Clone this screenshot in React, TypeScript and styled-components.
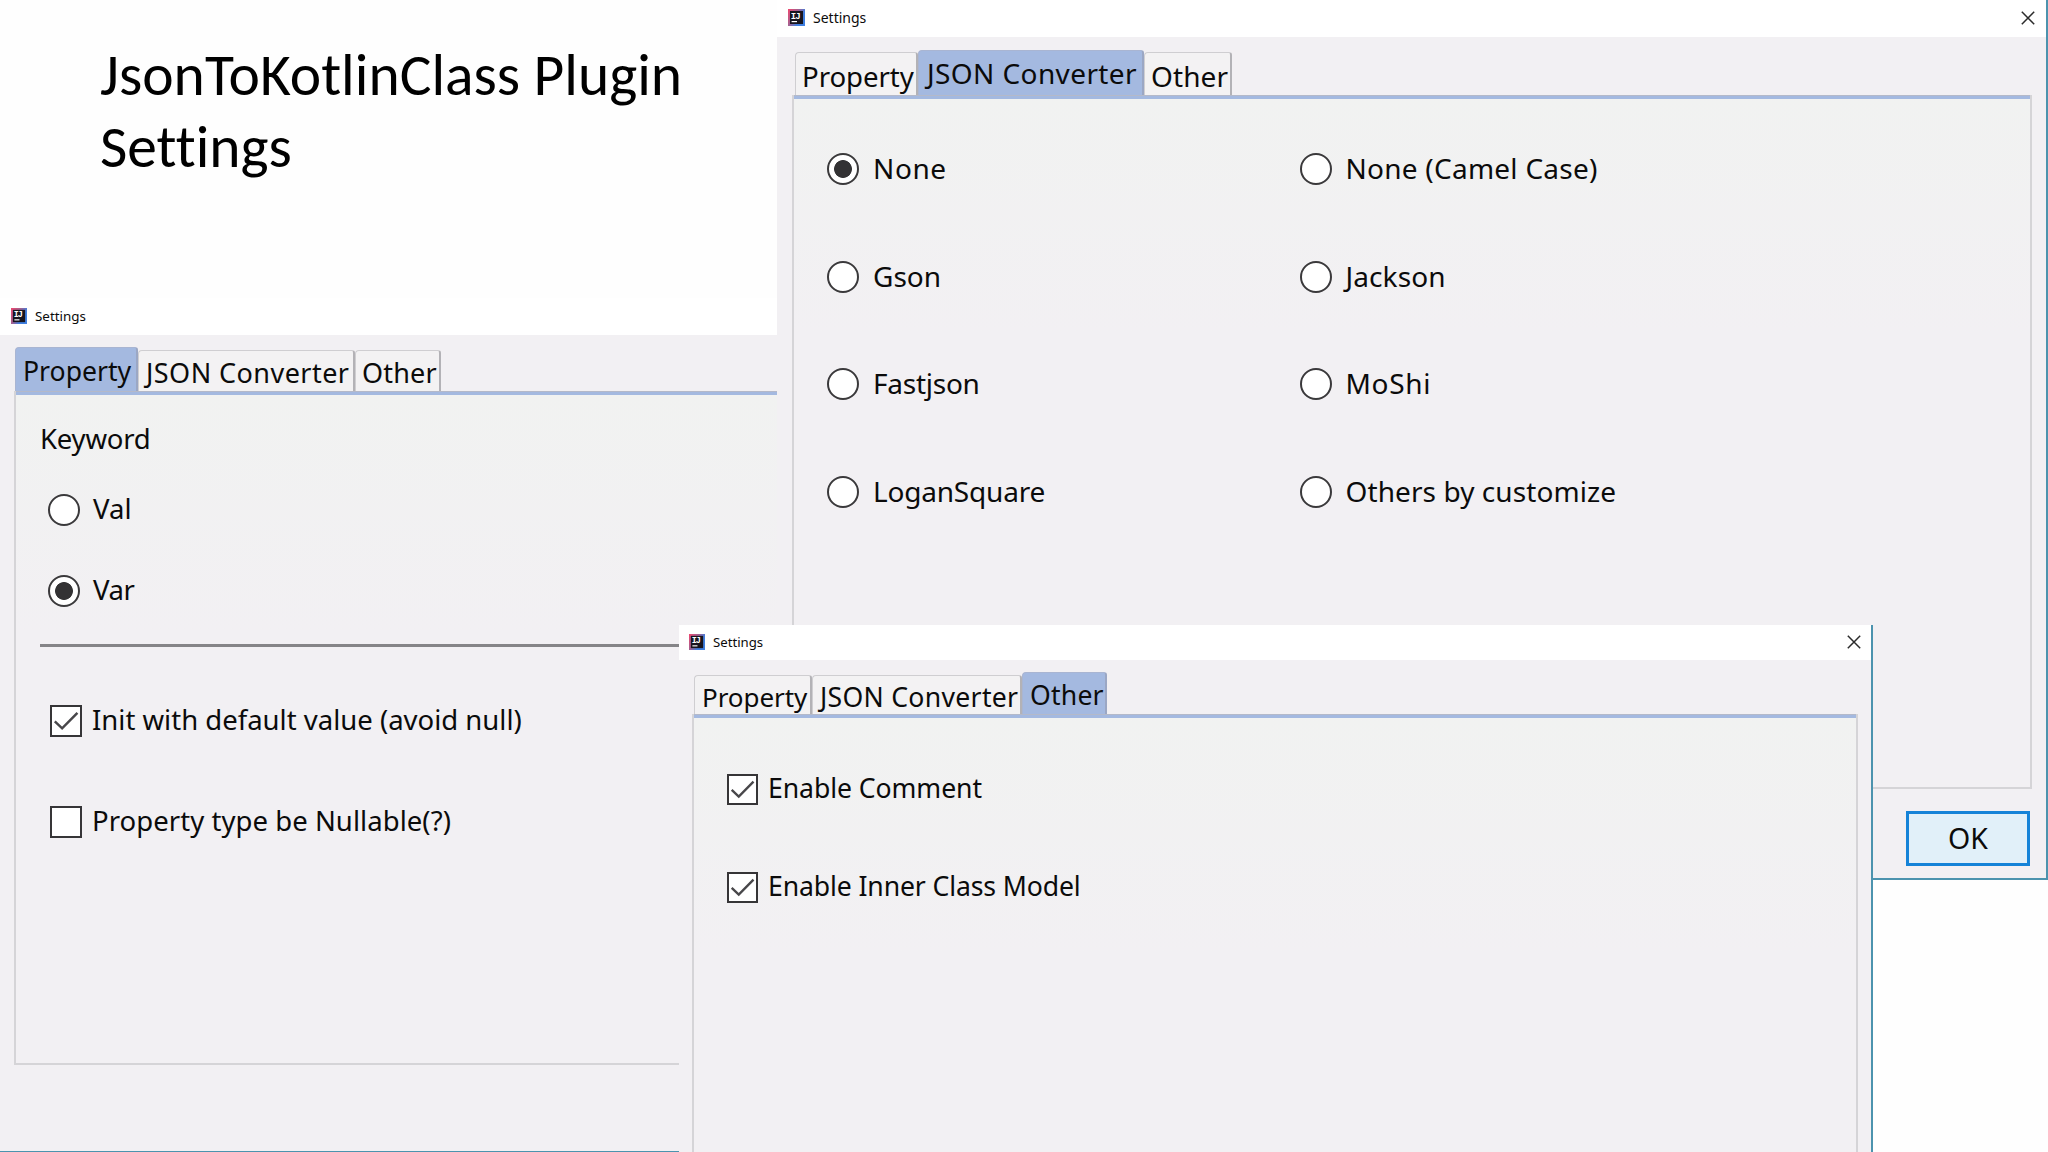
import React from 'react';
import styled, { createGlobalStyle } from 'styled-components';

const Global = createGlobalStyle`
  *, *::before, *::after { box-sizing: border-box; }
  body { margin: 0; background: #fff; overflow: hidden; }
`;

const uiFont = `'Segoe UI', 'Noto Sans', 'Open Sans', sans-serif`;

const Slide = styled.main`
  position: relative;
  width: 2048px;
  height: 1152px;
  overflow: hidden;
  background: #fefefe;
  color: #0b0b0b;
`;

const Heading = styled.h1`
  width: 740px;
  margin: 0;
  padding: 39px 0 0 100px;
  font: 400 59.5px/72px Carlito, Calibri, Lato, sans-serif;
  font-variant-ligatures: none;
  color: #000;
`;

const Window = styled.section<{ $x: number; $y: number; $w: number; $h: number; $edge?: string }>`
  position: absolute;
  left: ${(p) => p.$x}px;
  top: ${(p) => p.$y}px;
  width: ${(p) => p.$w}px;
  height: ${(p) => p.$h}px;
  display: flex;
  flex-direction: column;
  background: #f2f0f3;
  border: 0 solid #4c93ae;
  border-width: ${(p) => p.$edge || '0'};
  font-family: ${uiFont};
`;

const TitleBar = styled.header<{ $h: number; $left: number; $right: number }>`
  flex: none;
  display: flex;
  align-items: center;
  height: ${(p) => p.$h}px;
  padding: 0 ${(p) => p.$right}px 2px ${(p) => p.$left}px;
  background: #fff;
`;

const WindowName = styled.span<{ $size: number }>`
  flex: 1;
  padding-top: 1px;
  margin-left: 8px;
  font-size: ${(p) => p.$size}px;
  line-height: 20px;
`;

const TabBar = styled.nav<{ $h: number; $left: number }>`
  flex: none;
  display: flex;
  align-items: flex-end;
  height: ${(p) => p.$h}px;
  padding-left: ${(p) => p.$left}px;
`;

const Tab = styled.div<{ $w: number; $h: number; $active?: boolean; $pad: number; $top?: number; $size: number; $track?: number }>`
  width: ${(p) => p.$w}px;
  height: ${(p) => p.$h}px;
  padding: ${(p) => (p.$active ? 0 : 3) + (p.$top || 0)}px 0 0 ${(p) => p.$pad}px;
  display: flex;
  align-items: center;
  white-space: nowrap;
  font-size: ${(p) => p.$size}px;
  line-height: 36px;
  letter-spacing: ${(p) => p.$track || 0}px;
  background: ${(p) => (p.$active ? '#a4b9e0' : '#f3f2f3')};
  border: 1px solid ${(p) => (p.$active ? '#a9b5d2' : '#cfced1')};
  border-right: 2px solid ${(p) => (p.$active ? '#9ba7c4' : '#b3b2b6')};
  border-bottom: 0;
  border-radius: 4px 3px 0 0;
`;

const Panel = styled.div<{ $m: string; $pad: string }>`
  flex: 1;
  min-height: 0;
  margin: ${(p) => p.$m};
  padding: ${(p) => p.$pad};
  border: 2px solid #d5d4d7;
  border-top: 0;
  box-shadow: inset 0 1px 0 #b4b9c9, inset 0 4px 0 #a4b9e0;
  background: linear-gradient(#f1f2f1, #f2f0f3 240px);
`;

const ConverterGrid = styled.div`
  display: grid;
  grid-template-columns: 472.5px 1fr;
  grid-auto-rows: 107.7px;
`;

const Option = styled.label<{ $gap: number; $size: number; $track?: number; $h?: number; $left?: number }>`
  display: flex;
  align-items: center;
  gap: ${(p) => p.$gap}px;
  height: ${(p) => (p.$h ? `${p.$h}px` : 'auto')};
  padding-left: ${(p) => p.$left || 0}px;
  font-size: ${(p) => p.$size}px;
  letter-spacing: ${(p) => p.$track || 0}px;
  line-height: 38px;
  white-space: nowrap;
`;

const OptionText = styled.span`
  padding-bottom: 2px;
`;

const Radio = styled.span<{ $on?: boolean }>`
  flex: none;
  width: 32px;
  height: 32px;
  border: 2px solid #3a393b;
  border-radius: 50%;
  background: ${(p) => (p.$on ? 'radial-gradient(circle, #333234 0 8.5px, #fff 9.3px)' : '#fff')};
`;

const Box = styled.span<{ $size: number }>`
  flex: none;
  display: block;
  width: ${(p) => p.$size}px;
  height: ${(p) => p.$size}px;
  border: 2px solid #363537;
  background: #fff;
  svg { display: block; width: 100%; height: 100%; }
`;

const GroupName = styled.div`
  padding: 0 0 11px 24px;
  font-size: 27.5px;
  line-height: 38px;
  letter-spacing: -0.2px;
`;

const Divider = styled.hr`
  height: 3px;
  margin: 13px 0 39px 24px;
  border: 0;
  background: #858487;
`;

const Footer = styled.footer`
  flex: none;
  display: flex;
  justify-content: flex-end;
  height: 89px;
  padding: 22px 16px 0 0;
`;

const OkButton = styled.button`
  width: 124px;
  height: 55px;
  padding: 0 0 2px;
  border: 3px solid #1583d8;
  background: #e1f0f9;
  color: #0b0b0b;
  font: 28.5px/38px ${uiFont};
`;

const AppIcon = ({ size }: { size: number }) => (
  <svg width={size} height={size} viewBox="0 0 17 17">
    <defs>
      <linearGradient id="ij" x1="0" y1="0" x2="1" y2="0.6">
        <stop offset="0" stopColor="#f0476f" />
        <stop offset="0.45" stopColor="#a5608f" />
        <stop offset="0.8" stopColor="#3f7fe0" />
      </linearGradient>
    </defs>
    <rect width="17" height="17" fill="url(#ij)" />
    <rect x="2" y="2" width="13" height="13" fill="#17151f" />
    <text x="2.8" y="9.8" fontFamily="Liberation Mono, monospace" fontWeight="700" fontSize="9" letterSpacing="-0.9" fill="#fff">IJ</text>
    <rect x="3.6" y="12" width="5.4" height="1.2" fill="#fff" />
  </svg>
);

const CloseIcon = () => (
  <svg width="14" height="14" viewBox="0 0 14 14" stroke="#2b2b2b" strokeWidth="1.5">
    <path d="M0.8 0.8 13.2 13.2M13.2 0.8 0.8 13.2" />
  </svg>
);

const Check = ({ size, on }: { size: number; on?: boolean }) => (
  <Box $size={size}>
    {on && (
      <svg viewBox="0 0 26 26" fill="none" stroke="#48474a" strokeWidth="2.3">
        <path d="M2.6 13.4 9.4 19.8 23.6 5.4" />
      </svg>
    )}
  </Box>
);

const converters = [
  { name: 'None', track: 0.6, on: true },
  { name: 'None (Camel Case)', track: 0.25 },
  { name: 'Gson', track: 0 },
  { name: 'Jackson', track: 0.1 },
  { name: 'Fastjson', track: -0.25 },
  { name: 'MoShi', track: 0.7 },
  { name: 'LoganSquare', track: -0.2 },
  { name: 'Others by customize', track: 0.08 },
];

export default function App() {
  return (
    <Slide>
      <Global />
      <Heading>JsonToKotlinClass Plugin Settings</Heading>

      <Window $x={0} $y={298} $w={800} $h={854} $edge="0 0 1px 0">
        <TitleBar $h={37} $left={11} $right={0}>
          <AppIcon size={16} />
          <WindowName $size={13.4}>Settings</WindowName>
        </TitleBar>
        <TabBar $h={56} $left={15}>
          <Tab $w={123} $h={44} $pad={7} $top={2} $size={26.6} $active>Property</Tab>
          <Tab $w={217} $h={41} $pad={7} $top={1} $size={27} $track={0.45}>JSON Converter</Tab>
          <Tab $w={86} $h={41} $pad={6} $top={1} $size={27} $track={0.2}>Other</Tab>
        </TabBar>
        <Panel $m="0 0 86px 14px" $pad="29px 0 0 0">
          <GroupName>Keyword</GroupName>
          <Option $gap={13} $size={27.5} $h={81} $left={32}><Radio /><OptionText>Val</OptionText></Option>
          <Option $gap={13} $size={27.5} $track={-0.4} $h={81} $left={32}><Radio $on /><OptionText>Var</OptionText></Option>
          <Divider />
          <Option $gap={10} $size={27.5} $h={70} $left={34}><Check size={32} on /><OptionText>Init with default value (avoid null)</OptionText></Option>
          <Option $gap={10} $size={27.5} $track={0.05} $h={132} $left={34}><Check size={32} /><OptionText>Property type be Nullable(?)</OptionText></Option>
        </Panel>
      </Window>

      <Window $x={777} $y={0} $w={1271} $h={880} $edge="0 2px 2px 0">
        <TitleBar $h={37} $left={11} $right={11}>
          <AppIcon size={17} />
          <WindowName $size={14}>Settings</WindowName>
          <CloseIcon />
        </TitleBar>
        <TabBar $h={58} $left={18}>
          <Tab $w={123} $h={43} $pad={6} $size={27.6} $track={-0.05}>Property</Tab>
          <Tab $w={226} $h={45} $pad={8} $size={28} $track={0.4} $active>JSON Converter</Tab>
          <Tab $w={88} $h={43} $pad={6} $size={28} $track={0.1}>Other</Tab>
        </TabBar>
        <Panel $m="0 14px 0 15px" $pad="20px 0 0 33px">
          <ConverterGrid>
            {converters.map((c) => (
              <Option key={c.name} $gap={14} $size={28} $track={c.track}>
                <Radio $on={c.on} />
                <OptionText>{c.name}</OptionText>
              </Option>
            ))}
          </ConverterGrid>
        </Panel>
        <Footer>
          <OkButton>OK</OkButton>
        </Footer>
      </Window>

      <Window $x={679} $y={625} $w={1194} $h={527} $edge="0 2px 0 0">
        <TitleBar $h={35} $left={10} $right={10}>
          <AppIcon size={16} />
          <WindowName $size={13.2}>Settings</WindowName>
          <CloseIcon />
        </TitleBar>
        <TabBar $h={54} $left={15}>
          <Tab $w={118} $h={39} $pad={7} $size={26} $track={-0.05}>Property</Tab>
          <Tab $w={210} $h={39} $pad={7} $size={26.6} $track={0.3}>JSON Converter</Tab>
          <Tab $w={85} $h={42} $pad={7} $top={2} $size={26.6} $track={0.2} $active>Other</Tab>
        </TabBar>
        <Panel $m="0 13px -4px 13px" $pad="26px 0 0 33px">
          <Option $gap={10} $size={26.6} $track={-0.07} $h={98}><Check size={31} on /><OptionText>Enable Comment</OptionText></Option>
          <Option $gap={10} $size={26.6} $track={-0.12} $h={98}><Check size={31} on /><OptionText>Enable Inner Class Model</OptionText></Option>
        </Panel>
      </Window>
    </Slide>
  );
}
